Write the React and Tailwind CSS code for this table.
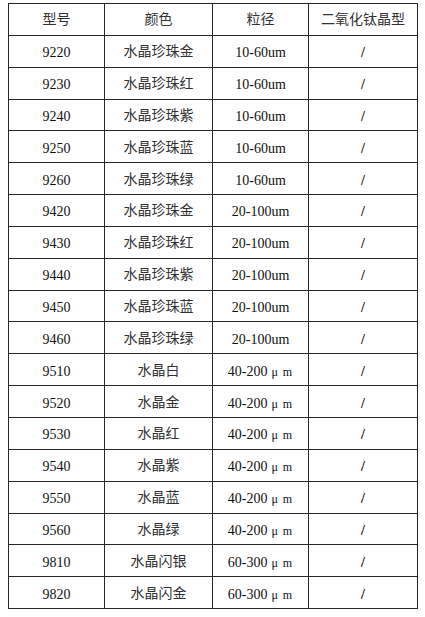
const rows = [
  ['9220', '水晶珍珠金', '10-60um'],
  ['9230', '水晶珍珠红', '10-60um'],
  ['9240', '水晶珍珠紫', '10-60um'],
  ['9250', '水晶珍珠蓝', '10-60um'],
  ['9260', '水晶珍珠绿', '10-60um'],
  ['9420', '水晶珍珠金', '20-100um'],
  ['9430', '水晶珍珠红', '20-100um'],
  ['9440', '水晶珍珠紫', '20-100um'],
  ['9450', '水晶珍珠蓝', '20-100um'],
  ['9460', '水晶珍珠绿', '20-100um'],
  ['9510', '水晶白', '40-200', true],
  ['9520', '水晶金', '40-200', true],
  ['9530', '水晶红', '40-200', true],
  ['9540', '水晶紫', '40-200', true],
  ['9550', '水晶蓝', '40-200', true],
  ['9560', '水晶绿', '40-200', true],
  ['9810', '水晶闪银', '60-300', true],
  ['9820', '水晶闪金', '60-300', true],
]

const cell = 'border border-[#262626] text-center align-middle p-0'

export default function App() {
  return (
    <div className="min-h-screen bg-white pt-[3px] pl-2 font-['Liberation_Serif','Noto_Sans_CJK_SC',serif] text-[14px] text-[#111]">
      <table className="border-collapse table-fixed w-[409px]">
        <colgroup>
          <col className="w-[96px]" />
          <col className="w-[108px]" />
          <col className="w-[96px]" />
          <col className="w-[109px]" />
        </colgroup>
        <thead>
          <tr className="h-[31.85px]">
            <th className={`${cell} font-normal text-[#333]`}>型号</th>
            <th className={`${cell} font-normal text-[#333]`}>颜色</th>
            <th className={`${cell} font-normal text-[#333]`}>粒径</th>
            <th className={`${cell} font-normal text-[#333]`}>二氧化钛晶型</th>
          </tr>
        </thead>
        <tbody>
          {rows.map(([code, color, size, micro]) => (
            <tr key={code} className="h-[31.85px]">
              <td className={`${cell} pt-[3px]`}>{code}</td>
              <td className={`${cell} pt-[1px] text-[#333]`}>{color}</td>
              <td className={`${cell} pt-[3px]`}>
                {size}
                {micro && <span className="ml-[4px] text-[12px] tracking-[1px]">μ m</span>}
              </td>
              <td className={`${cell} pt-[3px] font-bold`}>/</td>
            </tr>
          ))}
        </tbody>
      </table>
    </div>
  )
}
